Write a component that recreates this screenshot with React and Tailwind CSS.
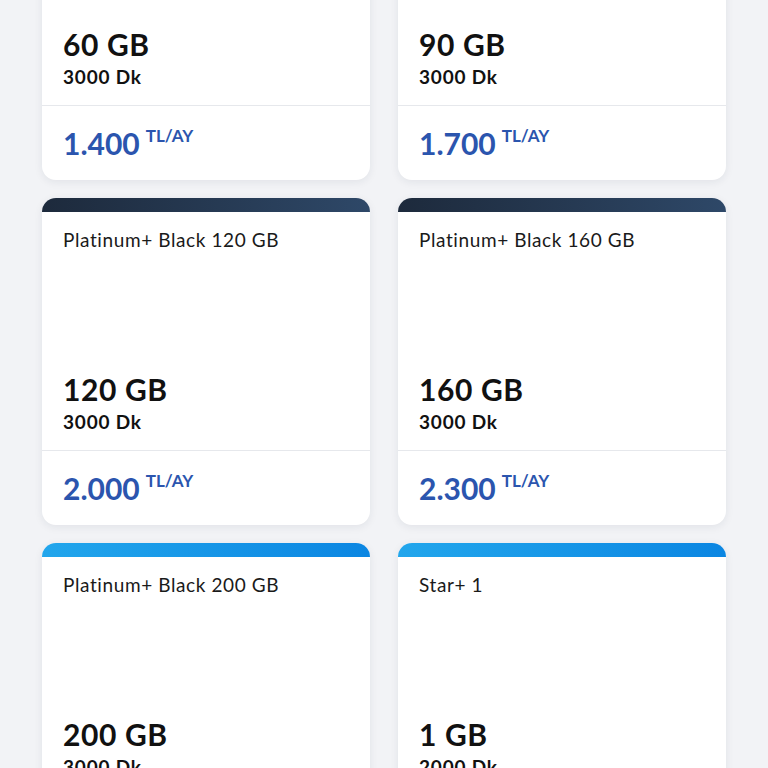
import React from "react";

const plans = [
  { title: "Platinum+ Black 60 GB", gb: "60 GB", dk: "3000 Dk", price: "1.400", bar: "dark" },
  { title: "Platinum+ Black 90 GB", gb: "90 GB", dk: "3000 Dk", price: "1.700", bar: "dark" },
  { title: "Platinum+ Black 120 GB", gb: "120 GB", dk: "3000 Dk", price: "2.000", bar: "dark" },
  { title: "Platinum+ Black 160 GB", gb: "160 GB", dk: "3000 Dk", price: "2.300", bar: "dark" },
  { title: "Platinum+ Black 200 GB", gb: "200 GB", dk: "3000 Dk", price: "2.600", bar: "blue" },
  { title: "Star+ 1", gb: "1 GB", dk: "2000 Dk", price: "500", bar: "blue" },
];

function Card({ p }) {
  return (
    <div className="flex h-[327px] flex-col overflow-hidden rounded-[14px] bg-white shadow-[0_2px_8px_rgba(30,40,60,0.08)]">
      {p.bar === "dark" ? (
        <div className="h-[14px] shrink-0 bg-gradient-to-r from-[#1d2a3c] to-[#2e4868]" />
      ) : (
        <div className="h-[14px] shrink-0 bg-gradient-to-r from-[#22a6ec] to-[#0b86e2]" />
      )}
      <div className="flex h-[238px] flex-col justify-between px-[21px] pt-[16px] pb-[16px]">
        <div className="text-[19px] leading-[24px] tracking-[0.6px] text-[#1a1a1a]">{p.title}</div>
        <div className="flex flex-col gap-[4px]">
          <div className="text-[30px] font-bold leading-[34px] tracking-[0.6px] text-[#111]">{p.gb}</div>
          <div className="text-[19px] font-bold leading-[24px] tracking-[0.8px] text-[#111]">{p.dk}</div>
        </div>
      </div>
      <div className="flex flex-1 items-center border-t border-[#e6e8ec] px-[21px]">
        <div className="flex items-start text-[#2b55ae]">
          <span className="text-[30px] font-bold leading-[31px]">{p.price}</span>
          <span className="ml-[6px] mt-[-1px] text-[17px] font-bold leading-[17px]">TL/AY</span>
        </div>
      </div>
    </div>
  );
}

export default function App() {
  return (
    <div
      className="h-[768px] w-[768px] overflow-hidden bg-[#f2f3f6]"
      style={{ fontFamily: "Lato, 'Noto Sans', sans-serif" }}
    >
      <div className="mt-[-147px] grid grid-cols-2 gap-x-[28px] gap-y-[18px] px-[42px]">
        {plans.map((p, i) => (
          <Card key={i} p={p} />
        ))}
      </div>
    </div>
  );
}
